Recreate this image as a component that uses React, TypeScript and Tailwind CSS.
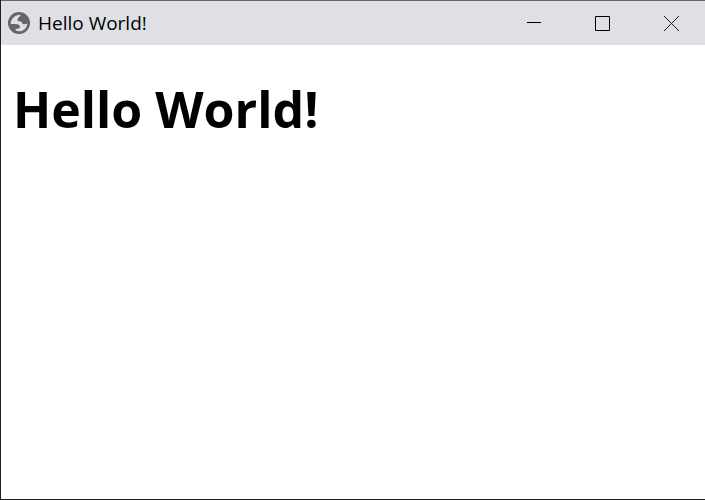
import React from "react";

function GlobeIcon() {
  return (
    <svg viewBox="0 0 22 22" className="size-[22px] shrink-0" aria-hidden="true">
      <circle cx="11" cy="11" r="11" fill="#64666b" />
      <path
        d="M2.700 12C2.600 7 6.500 3 12.500 2.800C12.500 4.500 10.500 5.500 9.800 6.500C9 8 9.500 9 11 9.200C13.500 9.500 14.500 10.500 14.500 12C16.500 12.400 18 11.800 19.300 11.500C19 16 15.500 19.300 11 19.300C9.600 19.300 8.400 19 7.600 18.600L7.600 17C10 17 12 16.500 12 14.600C11.800 12.800 10 12.300 7.500 12Z"
        fill="#dfe0e6"
      />
    </svg>
  );
}

function WindowButton({ label, children }: { label: string; children: React.ReactNode }) {
  return (
    <button type="button" aria-label={label} className="flex h-full w-[69px] items-center justify-center">
      <svg viewBox="0 0 16 16" className="size-4" fill="none" stroke="#000" aria-hidden="true">
        {children}
      </svg>
    </button>
  );
}

export default function App() {
  return (
    <div className="flex min-h-screen flex-col border-b border-l border-[#231f20] bg-white font-['Open_Sans','Noto_Sans',sans-serif] text-black">
      <header className="flex h-[45px] items-center gap-2 border-t border-[#66656d] bg-[#dfe0e6] pl-[7px]">
        <GlobeIcon />
        <span className="flex-1 text-[19px] leading-6">Hello World!</span>
        <div className="flex h-full">
          <WindowButton label="Minimize">
            <path d="M2 7.500h14" />
          </WindowButton>
          <WindowButton label="Maximize">
            <path d="M1.500 1.500h14v14h-14z" />
          </WindowButton>
          <WindowButton label="Close">
            <path d="M1 1l15 15M16 1L1 16" stroke="#222" />
          </WindowButton>
        </div>
      </header>
      <main className="px-3 pt-7">
        <h1 className="text-[50px] leading-[72px] font-bold">Hello World!</h1>
      </main>
    </div>
  );
}
